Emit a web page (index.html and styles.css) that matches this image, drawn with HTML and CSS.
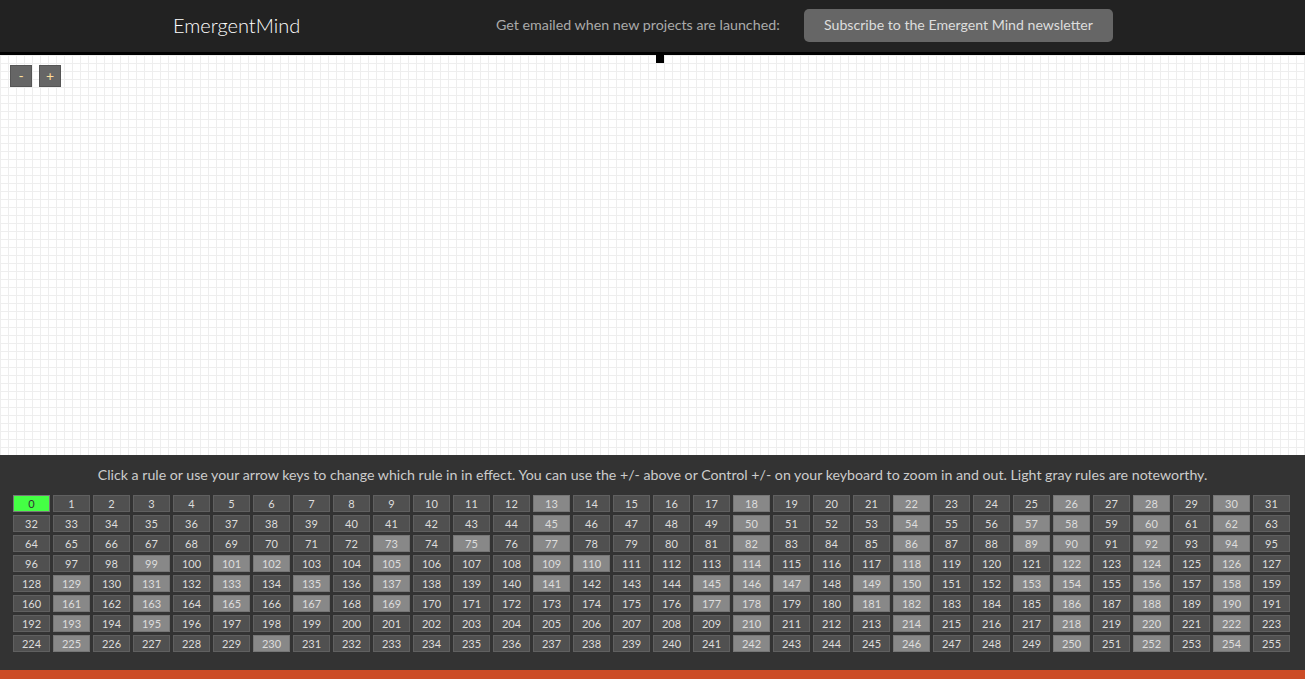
FILE: index.html
```html
<!DOCTYPE html>
<html>

<head>
  <title>Emergent Mind</title>
  <link rel="stylesheet" href="styles.css">
</head>

<body>
  <header class="topbar">
    <a class="logo">EmergentMind</a>
    <span class="signup">Get emailed when new projects are launched:</span>
    <a class="subscribe">Subscribe to the Emergent Mind newsletter</a>
  </header>

  <main class="world">
    <div class="marker"></div>
    <div class="zoom">
      <button class="zoomButton">-</button>
      <button class="zoomButton">+</button>
    </div>
  </main>

  <section class="panel">
    <p class="help">Click a rule or use your arrow keys to change which rule in in effect. You can use the +/- above or Control +/- on your keyboard to zoom in and out. Light gray rules are noteworthy.</p>
    <div class="rules" id="rules"></div>
  </section>

  <footer class="footerBar"></footer>

  <script src="script.js"></script>
</body>

</html>
```

FILE: styles.css
```css
* {
  box-sizing: border-box;
}

html,
body {
  height: 100%;
}

body {
  display: flex;
  flex-direction: column;
  margin: 0;
  overflow: hidden;
  font-family: Lato, "Open Sans", sans-serif;
}

.topbar {
  display: flex;
  align-items: center;
  flex: none;
  height: 55px;
  padding: 0 0 1px 173px;
  background-color: #222222;
  border-bottom: 3px solid #000000;
}

.logo {
  width: 323px;
  margin-bottom: 2px;
  color: #ffffff;
  font-size: 20px;
  font-weight: 300;
}

.signup {
  width: 308px;
  margin-bottom: 2px;
  color: #aaaaaa;
  font-size: 14.25px;
}

.subscribe {
  width: 309px;
  height: 33px;
  background-color: #666666;
  border-radius: 5px;
  color: #dddddd;
  font-size: 14.15px;
  line-height: 32px;
  text-align: center;
}

.world {
  position: relative;
  flex: 1;
  background-color: #ffffff;
  background-image:
    linear-gradient(to right, #eeeeee 1px, transparent 1px),
    linear-gradient(to bottom, #eeeeee 1px, transparent 1px);
  background-size: 8px 8px;
}

.marker {
  position: absolute;
  top: 0;
  left: 656px;
  width: 8px;
  height: 8px;
  background-color: #000000;
}

.zoom {
  position: absolute;
  top: 10px;
  left: 10px;
  display: flex;
  gap: 7px;
}

.zoomButton {
  width: 22px;
  height: 22px;
  padding: 0 0 2px;
  background-color: #666666;
  border: 1px solid #555555;
  color: #ffdf9a;
  font-family: Lato, sans-serif;
  font-size: 14px;
}

.panel {
  flex: none;
  height: 215px;
  background-color: #333333;
}

.help {
  margin: 0;
  padding-top: 11px;
  color: #cccccc;
  font-size: 14.2px;
  line-height: 18px;
  text-align: center;
}

.rules {
  display: grid;
  grid-template-columns: repeat(32, 37px);
  grid-auto-rows: 17px;
  gap: 3px;
  margin-top: 11px;
  padding-left: 13px;
}

.rule {
  padding: 0;
  background-color: #505050;
  border: 1px solid #606060;
  color: #dddddd;
  font-family: Lato, sans-serif;
  font-size: 11px;
  line-height: 15px;
  text-align: center;
}

.rule.light {
  background-color: #888888;
  border-color: #777777;
}

.rule.active {
  background-color: #44ff44;
  border-color: #777777;
  color: #333333;
}

.footerBar {
  flex: none;
  height: 9px;
  background-color: #cc4c26;
}
```

FILE: script.js
```js
const rulesDiv = document.getElementById('rules');

// the rules that show up light gray
const lightRules = [
  13, 18, 22, 26, 28, 30,
  45, 50, 54, 57, 58, 60, 62,
  73, 75, 77, 82, 86, 89, 90, 92, 94,
  99, 101, 102, 105, 109, 110, 114, 118, 122, 124, 126,
  129, 131, 133, 135, 137, 141, 145, 146, 147, 149, 150, 153, 154, 156, 158,
  161, 163, 165, 167, 169, 177, 178, 181, 182, 186, 188, 190,
  193, 195, 210, 214, 218, 220, 222,
  225, 230, 242, 246, 250, 252, 254
];

for (let i = 0; i < 256; i++) {
  const rule = document.createElement('div');
  rule.className = 'rule';
  if (lightRules.includes(i)) {
    rule.classList.add('light');
  }
  if (i === 0) {
    rule.classList.add('active');
  }
  rule.textContent = i;
  rulesDiv.appendChild(rule);
}
```
